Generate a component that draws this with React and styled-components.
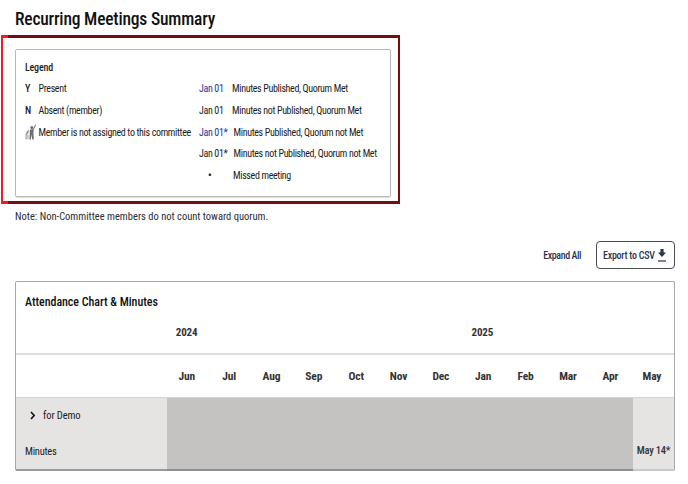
import React from "react";
import styled, { createGlobalStyle } from "styled-components";

const Global = createGlobalStyle`
  html, body { margin: 0; padding: 0; background: #fff; }
  body { font-family: Roboto, "Liberation Sans", sans-serif; font-stretch: 85%; color: #1c1c1c; }
`;
const Page = styled.div`
  width: 688px; height: 484px; overflow: hidden; box-sizing: border-box;
  padding-top: 8px; display: flex; flex-direction: column;
`;
const Title = styled.h1`
  margin: 0 0 0 15px; font-size: 17.5px; line-height: 22px; font-weight: 500;
  letter-spacing: -0.2px; color: #111;
`;
const Highlight = styled.div`
  margin: 5px 0 0 1px; width: 399px; height: 169px; box-sizing: border-box;
  border-style: solid; border-width: 3px 2px;
  border-image: linear-gradient(to right, #ee1c25 7px, #7a0c0c 7px) 3 2;
  padding: 11px 7px 4px 12px; display: flex;
`;
const LegendCard = styled.section`
  flex: 1; min-width: 0; box-sizing: border-box; background: #fff; border: 1px solid #b9b9b9; border-radius: 2px;
  padding: 11px 9px; box-shadow: 0 1px 1px #ddd;
`;
const LegendTitle = styled.div`
  font-size: 10px; line-height: 14px; font-weight: 500; letter-spacing: -0.2px; margin-bottom: 3px;
`;
const LegendColumns = styled.div`display: flex;`;
const LeftCol = styled.div`width: 174px; flex: none; display: flex; flex-direction: column;`;
const RightCol = styled.div`display: flex; flex-direction: column;`;
const Row = styled.div`
  height: 21.7px; display: flex; align-items: center; font-size: 10px;
  letter-spacing: -0.35px; white-space: nowrap;
`;
const Sym = styled.span`
  width: 13.5px; flex: none; font-weight: 500; display: flex; align-items: center;
`;
const DateMark = styled.span`
  width: ${p => p.$w}px; flex: none; color: ${p => (p.$pub ? "#24388f" : "#1c1c1c")};
`;
const Dot = styled.span`width: 34px; flex: none; padding-left: 9px; box-sizing: border-box; font-weight: 700;`;
const Note = styled.p`
  margin: 6px 0 0 15px; font-size: 10.5px; line-height: 14px; letter-spacing: 0; color: #2b2b33;
`;
const Actions = styled.div`
  margin: 17px 13px 0 0; height: 28px; display: flex; justify-content: flex-end; align-items: center; gap: 15px;
`;
const LinkButton = styled.span`font-size: 10px; letter-spacing: -0.42px; color: #2c3350; font-weight: 500;`;
const ExportButton = styled.button`
  width: 79px; height: 28px; box-sizing: border-box; padding: 0 0 0 6px; background: #fff;
  border: 1px solid #4a4a55; border-radius: 4px; display: flex; align-items: center; gap: 3px;
  font: 500 10px Roboto, sans-serif; font-stretch: 85%; letter-spacing: -0.25px; color: #2c3350;
`;
const Chart = styled.section`
  margin: 12px 13px 0 15px; height: 190px; box-sizing: border-box;
  border: 1px solid #a9a9a9; border-bottom: 0; border-radius: 2px; display: flex; flex-direction: column;
`;
const ChartTitle = styled.div`
  height: 40px; padding: 13px 0 0 9px; box-sizing: border-box; font-size: 12px; line-height: 14px;
  font-weight: 500; letter-spacing: -0.05px; color: #111;
`;
const YearRow = styled.div`
  height: 33px; box-sizing: border-box; border-bottom: 2px solid #dedede; display: grid; padding-top: 1px;
  grid-template-columns: 151px repeat(12, 1fr); font-size: 11px; font-weight: 700; letter-spacing: -0.1px;
`;
const YearCell = styled.div`
  grid-column: ${p => p.$col}; text-align: center; white-space: nowrap; line-height: 20px; color: #333;
  transform: translateX(-1.5px);
`;
const MonthRow = styled.div`
  height: 42px; display: grid; grid-template-columns: 151px repeat(11, 42.36px) 1fr; align-items: center;
  font-size: 11.5px; font-weight: 700; letter-spacing: -0.15px; color: #333;
`;
const Month = styled.div`text-align: center; transform: translateX(-1.5px);`;
const Body = styled.div`
  flex: 1; display: grid; grid-template-columns: 151px 466px 1fr;
  border-top: 1px solid #d4d4d4;
`;
const NameCell = styled.div`
  background: #e5e4e3; display: flex; flex-direction: column; justify-content: space-between; padding: 11px 0 11px 9px;
  border-bottom: 2px solid #9a9a9a;
`;
const Member = styled.div`
  display: flex; align-items: center; font-size: 10.5px; letter-spacing: -0.1px; gap: 7px; padding-left: 5px;
`;
const MinutesLabel = styled.div`font-size: 10.5px; letter-spacing: -0.25px;`;
const FillCell = styled.div`background: #c4c3c1; border-bottom: 2px solid #8e8e8e;`;
const LastCell = styled.div`
  background: #e5e4e3; display: flex; align-items: flex-end; justify-content: center; padding-bottom: 12px;
  font-size: 10.5px; letter-spacing: -0.2px; font-weight: 500; color: #333; white-space: nowrap;
  border-bottom: 2px solid #c8c8c8;
`;

const WalkerIcon = () => (
  <svg width="11" height="16" viewBox="0 0 11 16" fill="#6e6e6e">
    <circle cx="6.8" cy="3.6" r="1.5" />
    <path d="M10.2 0.4 L11 1 L8.8 5.6 L8.4 9 L8.8 15.4 L7.2 15.4 L6.6 10.4 L5.8 15.4 L4.4 15.4 L4.8 8.4 L5 5.6 L8 5.2 Z" />
    <path d="M4 6.2 L2.4 6.6 L0.6 10.6 L0.6 15.4 L1.6 15.4 L1.6 11 L3.6 8.4 Z" fill="#8f8f8f" />
    <rect x="2.4" y="10.6" width="1" height="4.8" fill="#a0a0a0" />
  </svg>
);
const DownloadIcon = () => (
  <svg width="8" height="13" viewBox="0 0 8 13" fill="#2c3350">
    <path d="M2.4 0 H5.6 V3.6 H8 L4 8 L0 3.6 H2.4 Z" />
    <rect x="0" y="11.4" width="8" height="1.2" />
  </svg>
);
const Chevron = () => (
  <svg width="6" height="9" viewBox="0 0 6 9" fill="none" stroke="#111" strokeWidth="1.6">
    <path d="M1 1 L4.2 4.5 L1 8" />
  </svg>
);

const months = ["Jun","Jul","Aug","Sep","Oct","Nov","Dec","Jan","Feb","Mar","Apr","May"];
const legendRight = [
  [true, 33, "Jan 01", "Minutes Published, Quorum Met"],
  [false, 33, "Jan 01", "Minutes not Published, Quorum Met"],
  [true, 34.5, "Jan 01*", "Minutes Published, Quorum not Met"],
  [false, 34.5, "Jan 01*", "Minutes not Published, Quorum not Met"],
];

export default function App() {
  return (
    <Page>
      <Global />
      <Title>Recurring Meetings Summary</Title>
      <Highlight>
        <LegendCard>
          <LegendTitle>Legend</LegendTitle>
          <LegendColumns>
            <LeftCol>
              <Row><Sym>Y</Sym>Present</Row>
              <Row><Sym>N</Sym>Absent (member)</Row>
              <Row><Sym><WalkerIcon /></Sym>Member is not assigned to this committee</Row>
            </LeftCol>
            <RightCol>
              {legendRight.map(([pub, w, d, t]) => (
                <Row key={t}><DateMark $pub={pub} $w={w}>{d}</DateMark>{t}</Row>
              ))}
              <Row><Dot>•</Dot>Missed meeting</Row>
            </RightCol>
          </LegendColumns>
        </LegendCard>
      </Highlight>
      <Note>Note: Non-Committee members do not count toward quorum.</Note>
      <Actions>
        <LinkButton>Expand All</LinkButton>
        <ExportButton>Export to CSV <DownloadIcon /></ExportButton>
      </Actions>
      <Chart>
        <ChartTitle>Attendance Chart &amp; Minutes</ChartTitle>
        <YearRow>
          <YearCell $col="2 / span 1">2024</YearCell>
          <YearCell $col="9 / span 1">2025</YearCell>
        </YearRow>
        <MonthRow>
          <span />
          {months.map((m) => <Month key={m}>{m}</Month>)}
        </MonthRow>
        <Body>
          <NameCell>
            <Member><Chevron /> for Demo</Member>
            <MinutesLabel>Minutes</MinutesLabel>
          </NameCell>
          <FillCell />
          <LastCell>May 14*</LastCell>
        </Body>
      </Chart>
    </Page>
  );
}
